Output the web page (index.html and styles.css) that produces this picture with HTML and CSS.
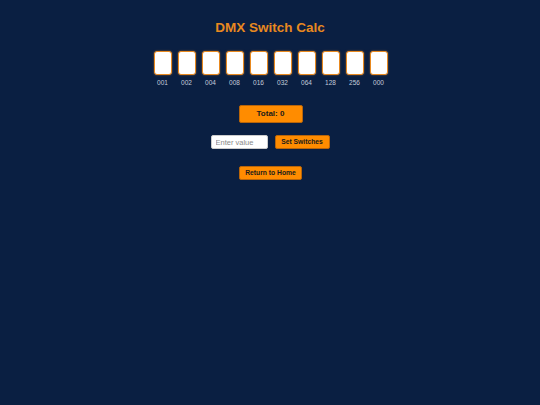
FILE: index.html
```html
<!DOCTYPE html>
<html>
<head>
<meta charset="utf-8">
<title>DMX Switch Calc</title>
<link rel="stylesheet" href="styles.css">
</head>
<body>
<main class="app">
  <h1 class="title">DMX Switch Calc</h1>
  <div class="switches">
    <div class="sw"><div class="sw-box"></div><span class="sw-label">001</span></div>
    <div class="sw"><div class="sw-box"></div><span class="sw-label">002</span></div>
    <div class="sw"><div class="sw-box"></div><span class="sw-label">004</span></div>
    <div class="sw"><div class="sw-box"></div><span class="sw-label">008</span></div>
    <div class="sw"><div class="sw-box"></div><span class="sw-label">016</span></div>
    <div class="sw"><div class="sw-box"></div><span class="sw-label">032</span></div>
    <div class="sw"><div class="sw-box"></div><span class="sw-label">064</span></div>
    <div class="sw"><div class="sw-box"></div><span class="sw-label">128</span></div>
    <div class="sw"><div class="sw-box"></div><span class="sw-label">256</span></div>
    <div class="sw"><div class="sw-box"></div><span class="sw-label">000</span></div>
  </div>
  <div class="total">Total: 0</div>
  <div class="controls">
    <input class="value-input" type="text" placeholder="Enter value">
    <button class="btn btn-set">Set Switches</button>
  </div>
  <button class="btn btn-home">Return to Home</button>
</main>
</body>
</html>
```
FILE: styles.css
```css
html, body {
  margin: 0;
  padding: 0;
  background: #0a1f42;
  height: 100%;
}
body {
  font-family: "Liberation Sans", Arial, sans-serif;
}
.app {
  display: flex;
  flex-direction: column;
  align-items: center;
  padding-top: 20px;
}
.title {
  margin: 0;
  font-size: 13.5px;
  line-height: 16px;
  font-weight: bold;
  color: #e8891f;
}
.switches {
  display: flex;
  gap: 6px;
  margin-top: 15px;
  margin-left: 1px;
}
.sw {
  display: flex;
  flex-direction: column;
  align-items: center;
}
.sw-box {
  width: 16px;
  height: 22px;
  background: #fff;
  border: 1px solid #e8891f;
  border-radius: 3px;
  box-shadow: 0 0 2px rgba(255, 150, 40, 0.55);
}
.sw-label {
  margin-top: 4px;
  font-size: 6.5px;
  line-height: 8px;
  color: #c4ccdb;
}
.total {
  margin-top: 18px;
  width: 62px;
  height: 16px;
  line-height: 16px;
  text-align: center;
  background: #ff8c00;
  border: 1px solid #b8650a;
  border-radius: 2px;
  font-size: 8px;
  font-weight: bold;
  color: #1a1a1a;
  margin-left: 1px;
}
.controls {
  display: flex;
  gap: 7px;
  margin-top: 12px;
  align-items: center;
}
.value-input {
  box-sizing: border-box;
  width: 57px;
  height: 14px;
  padding: 0 4px;
  border: 1px solid #ccc;
  border-radius: 2px;
  background: #fff;
  font-family: "Liberation Sans", Arial, sans-serif;
  font-size: 7.5px;
  outline: none;
}
.value-input::placeholder {
  color: #8a8a8a;
}
.btn {
  box-sizing: border-box;
  height: 14px;
  background: #ff8c00;
  border: 1px solid #b8650a;
  border-radius: 2px;
  font-family: "Liberation Sans", Arial, sans-serif;
  font-size: 6.75px;
  font-weight: bold;
  color: #1a1a1a;
  padding: 0;
  line-height: 12px;
}
.btn-set {
  width: 55px;
}
.btn-home {
  width: 63.5px;
  margin-top: 17px;
  margin-left: 1px;
}
```
